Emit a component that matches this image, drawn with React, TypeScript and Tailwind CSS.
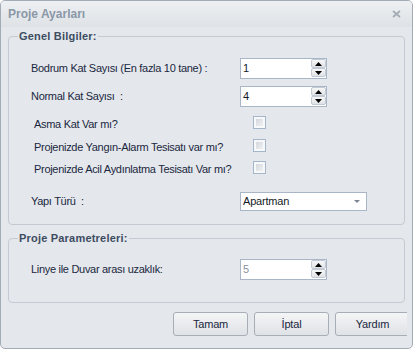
import React from "react";

const font = "font-['Liberation_Sans',Arial,sans-serif]";
const label = "text-[11px] tracking-[-0.3px] text-[#1a2740] leading-[13px] whitespace-nowrap";
const legend = "ml-[9px] px-[1px] text-[11px] font-bold tracking-[0.2px] leading-[14px] text-[#3d4c61]";

function Arrow({ up }: { up?: boolean }) {
  return (
    <svg width="7" height="4" viewBox="0 0 7 4">
      {up ? <polygon points="0,4 3.5,0 7,4" fill="#000" /> : <polygon points="0,0 7,0 3.5,4" fill="#000" />}
    </svg>
  );
}

function Spin({ value, muted }: { value: string; muted?: boolean }) {
  return (
    <div className="w-[87px] h-[21px] border border-[#a9b6c8] bg-white flex items-start pl-[2px]">
      <span className={`flex-1 text-[11px] leading-[19px] ${muted ? "text-[#8a939e]" : "text-[#141a26]"}`}>{value}</span>
      <div className="flex flex-col w-[15px] h-[18px]">
        <div className="h-[9px] flex items-center justify-center rounded-[2px] border border-[#c4cad3] bg-gradient-to-b from-[#f7f7f8] to-[#e0e3e6]">
          <Arrow up />
        </div>
        <div className="h-[9px] flex items-center justify-center rounded-[2px] border border-[#c4cad3] bg-gradient-to-b from-[#f7f7f8] to-[#e0e3e6]">
          <Arrow />
        </div>
      </div>
    </div>
  );
}

function Check() {
  return (
    <div className="w-[13px] h-[13px] border border-[#a5b5ca] bg-[#f7f8f9] p-[2px] mb-[3px] ml-[13px]">
      <div className="w-full h-full bg-gradient-to-br from-[#d3d7dc] to-[#f0f1f3]" />
    </div>
  );
}

function Btn({ children }: { children: React.ReactNode }) {
  return (
    <div className="w-[75px] h-[24px] shrink-0 flex items-center justify-center rounded-[3px] border border-[#a8aeb6] bg-gradient-to-b from-[#f4f5f6] to-[#dfe2e6] text-[11px] tracking-[-0.2px] text-[#1a2740]">
      {children}
    </div>
  );
}

export default function App() {
  return (
    <div className={`${font} w-[413px] h-[349px] border border-[#a3abb5] rounded-[5px] bg-[#e4e8ec] overflow-hidden flex flex-col`}>
      <div className="h-[26px] shrink-0 flex items-center justify-between pl-[7px] pr-[11px] bg-gradient-to-b from-[#eef0f2] to-[#dee2e6]">
        <span className="text-[12px] font-bold text-[#8a97a7]">Proje Ayarları</span>
        <svg width="9" height="8" viewBox="0 0 9 8">
          <path d="M1 1 L8 7 M8 1 L1 7" stroke="#a3abb5" strokeWidth="1.7" />
        </svg>
      </div>
      <div className="w-[406px] overflow-hidden flex flex-col">
        <fieldset className="ml-[7px] mt-[2px] w-[397px] border border-[#c3cad3] rounded-[4px] p-0">
          <legend className={legend}>Genel Bilgiler:</legend>
          <div className="pl-[22px] pb-[13px]">
            <div className="flex items-center mt-[15px] h-[21px]">
              <div className={`${label} w-[209px]`}>Bodrum Kat Sayısı (En fazla 10 tane) :</div>
              <Spin value="1" />
            </div>
            <div className="flex items-center mt-[7px] h-[21px]">
              <div className={`${label} w-[209px]`}>Normal Kat Sayısı&nbsp; :</div>
              <Spin value="4" />
            </div>
            <div className="flex items-center mt-[6px] h-[22px]">
              <div className={`${label} w-[209px] pl-[3px]`}>Asma Kat Var mı?</div>
              <Check />
            </div>
            <div className="flex items-center mt-[1px] h-[22px]">
              <div className={`${label} w-[209px] pl-[3px]`}>Projenizde Yangın-Alarm Tesisatı var mı?</div>
              <Check />
            </div>
            <div className="flex items-center h-[22px]">
              <div className={`${label} w-[209px] pl-[3px]`}>Projenizde Acil Aydınlatma Tesisatı Var mı?</div>
              <Check />
            </div>
            <div className="flex items-center mt-[12px] h-[19px]">
              <div className={`${label} w-[209px]`}>Yapı Türü&nbsp; :</div>
              <div className="w-[127px] h-[19px] border border-[#a9b6c8] bg-white flex items-center pl-[2px] pr-[6px]">
                <span className="flex-1 text-[11px] tracking-[-0.2px] text-[#141a26]">Apartman</span>
                <svg width="6" height="3" viewBox="0 0 6 3">
                  <polygon points="0,0 6,0 3,3" fill="#7d8590" />
                </svg>
              </div>
            </div>
          </div>
        </fieldset>
        <fieldset className="ml-[7px] mt-[6px] w-[397px] border border-[#c3cad3] rounded-[4px] p-0">
          <legend className={legend}>Proje Parametreleri:</legend>
          <div className="pl-[22px] pb-[22px]">
            <div className="flex items-center mt-[14px] h-[21px]">
              <div className={`${label} w-[209px]`}>Linye ile Duvar arası uzaklık:</div>
              <Spin value="5" muted />
            </div>
          </div>
        </fieldset>
        <div className="mt-[9px] flex justify-end gap-[6px] -mr-[3px]">
          <Btn>Tamam</Btn>
          <Btn>İptal</Btn>
          <Btn>Yardım</Btn>
        </div>
      </div>
    </div>
  );
}
